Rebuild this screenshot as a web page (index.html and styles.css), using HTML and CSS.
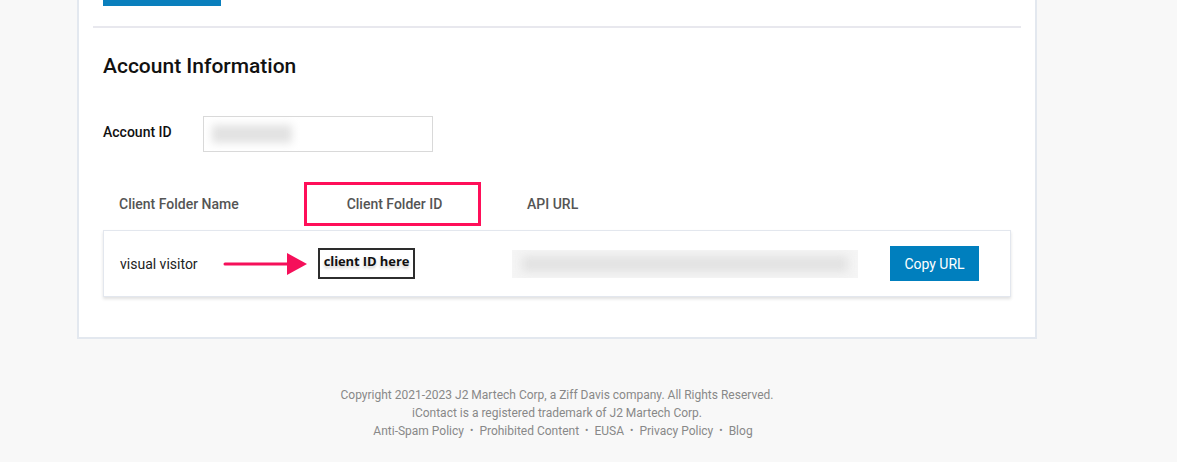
FILE: index.html
```html
<!DOCTYPE html>
<html lang="en">
<head>
<meta charset="utf-8">
<title>Account Information</title>
<link rel="stylesheet" href="styles.css">
</head>
<body>
<div class="page">
  <div class="card">
    <div class="btn-stub"></div>
    <div class="divider"></div>
    <div class="content">
      <h2 class="title">Account Information</h2>
      <div class="field">
        <label class="field-label">Account ID</label>
        <div class="field-input"><div class="blur blur-short"></div></div>
      </div>
      <div class="table-head">
        <div class="th th-name">Client Folder Name</div>
        <div class="th th-id">Client Folder ID</div>
        <div class="th th-url">API URL</div>
      </div>
      <div class="table-row">
        <div class="td-name">visual visitor</div>
        <svg class="arrow" width="84" height="24" viewBox="0 0 84 24">
          <line x1="2" y1="12" x2="66" y2="12" stroke="#f5105a" stroke-width="3" stroke-linecap="round"/>
          <polygon points="64,1 84,12 64,23" fill="#f5105a"/>
        </svg>
        <div class="client-id">client ID here</div>
        <div class="url-blur"><div class="blur blur-long"></div></div>
        <button class="copy-btn">Copy URL</button>
      </div>
    </div>
  </div>
  <footer class="footer">
    <p>Copyright 2021-2023 J2 Martech Corp, a Ziff Davis company. All Rights Reserved.</p>
    <p>iContact is a registered trademark of J2 Martech Corp.</p>
    <p class="links">
      <span>Anti-Spam Policy</span><span class="dot">•</span><span>Prohibited Content</span><span class="dot">•</span><span>EUSA</span><span class="dot">•</span><span>Privacy Policy</span><span class="dot">•</span><span>Blog</span>
    </p>
  </footer>
</div>
</body>
</html>
```

FILE: styles.css
```css
* { box-sizing: border-box; }
html, body { margin: 0; padding: 0; }
body {
  background: #f8f8f8;
  font-family: Roboto, "Liberation Sans", Arial, sans-serif;
  color: #222;
}
.page {
  width: 960px;
  margin-left: 77px;
}
.card {
  background: #fff;
  border: solid #e3e8ef;
  border-width: 0 2px 2px 2px;
  padding: 0 14px 40px 14px;
}
.btn-stub {
  width: 118px;
  height: 6px;
  background: #0a7fbd;
  margin-left: 10px;
}
.divider {
  height: 2px;
  background: #e8e8ee;
  margin-top: 20px;
}
.content {
  padding-left: 10px;
  padding-right: 10px;
}
.title {
  margin: 24px 0 0 0;
  font-family: Roboto, "Liberation Sans", Arial, sans-serif;
  font-weight: 500;
  font-size: 21px;
  line-height: 28px;
  color: #111;
}
.field {
  display: flex;
  align-items: center;
  margin-top: 36px;
}
.field-label {
  width: 100px;
  font-size: 14px;
  font-weight: 500;
  color: #111;
  padding-bottom: 4px;
}
.field-input {
  width: 230px;
  height: 36px;
  border: 1px solid #d9d9d9;
  padding: 8px 8px;
  overflow: hidden;
}
.blur {
  background: #e2e2e2;
  filter: blur(4px);
  height: 100%;
}
.blur-short { width: 80px; }
.table-head {
  display: flex;
  align-items: center;
  margin-top: 30px;
  height: 44px;
}
.th {
  font-size: 14px;
  font-weight: 500;
  color: #555;
}
.th-name {
  width: 201px;
  padding-left: 16px;
}
.th-id {
  width: 177px;
  height: 44px;
  border: 3px solid #ff0f59;
  display: flex;
  align-items: center;
  justify-content: center;
  padding-left: 4px;
}
.th-url {
  padding-left: 46px;
}
.table-row {
  display: flex;
  align-items: center;
  margin-top: 4px;
  height: 67px;
  border: 1px solid #e3e7ee;
  box-shadow: 0 2px 3px rgba(0, 0, 0, 0.12);
  padding: 0 16px;
}
.td-name {
  width: 103px;
  font-size: 14px;
  color: #222;
}
.arrow {
  display: block;
  flex: none;
}
.client-id {
  margin-left: 11px;
  width: 97px;
  height: 31px;
  border: 2px solid #2d2d2d;
  font-family: "Open Sans", "DejaVu Sans", sans-serif;
  font-weight: 700;
  font-size: 13px;
  line-height: 16px;
  color: #111;
  text-align: center;
  padding-top: 3px;
  letter-spacing: -0.1px;
  text-shadow: 0 0 3px #fff, 0 2px 3px rgba(0,0,0,0.25);
}
.url-blur {
  margin-left: 97px;
  width: 346px;
  height: 28px;
  background: #f5f5f5;
  padding: 6px 10px;
  overflow: hidden;
}
.blur-long {
  background: #e2e2e2;
  filter: blur(5px);
}
.copy-btn {
  margin-left: 32px;
  width: 89px;
  height: 35px;
  border: none;
  background: #007fbe;
  color: #fff;
  font-family: Roboto, "Liberation Sans", Arial, sans-serif;
  font-size: 14px;
  padding: 0;
}
.footer {
  text-align: center;
  font-size: 12px;
  color: #888;
  padding-top: 47px;
}
.footer p {
  margin: 0;
  line-height: 18px;
}
.links {
  padding-left: 12px;
}
.dot {
  margin: 0 6px;
  font-size: 10px;
  vertical-align: 1px;
}
```
